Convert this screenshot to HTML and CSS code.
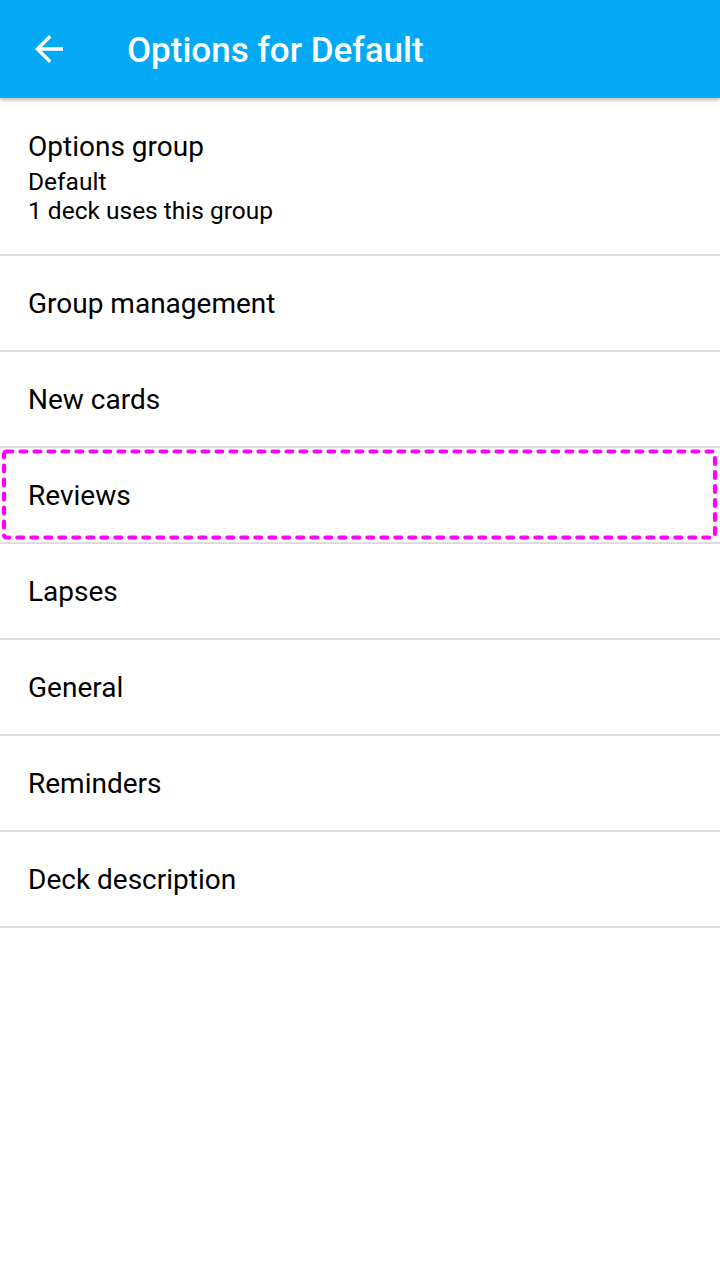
FILE: index.html
```html
<!DOCTYPE html>
<html>
<head>
<meta charset="utf-8">
<link rel="stylesheet" href="styles.css">
</head>
<body>
<header class="toolbar">
  <div class="nav-btn">
    <svg width="42" height="42" viewBox="0 0 24 24"><path d="M20 11H7.83l5.59-5.59L12 4l-8 8 8 8 1.41-1.41L7.83 13H20v-2z" fill="#fff"/></svg>
  </div>
  <h1 class="title">Options for Default</h1>
</header>
<main class="list">
  <div class="row row-tall">
    <div class="row-title">Options group</div>
    <div class="row-sub">Default</div>
    <div class="row-sub">1 deck uses this group</div>
  </div>
  <div class="row"><div class="row-title">Group management</div></div>
  <div class="row"><div class="row-title">New cards</div></div>
  <div class="row row-focus">
    <div class="row-title">Reviews</div>
    <svg class="focus-ring" width="720" height="94" viewBox="0 0 720 94"><rect x="4" y="3.5" width="711" height="86" rx="2.5" fill="none" stroke="#ff00ff" stroke-width="4.2" stroke-dasharray="5.8 8.2" stroke-linecap="round"/></svg>
  </div>
  <div class="row"><div class="row-title">Lapses</div></div>
  <div class="row"><div class="row-title">General</div></div>
  <div class="row"><div class="row-title">Reminders</div></div>
  <div class="row"><div class="row-title">Deck description</div></div>
</main>
</body>
</html>
```
FILE: styles.css
```css
html, body {
  margin: 0;
  padding: 0;
  background: #fff;
  font-family: Roboto, "Noto Sans", sans-serif;
}
.toolbar {
  height: 98px;
  background: #03a9f4;
  display: flex;
  align-items: center;
  box-shadow: 0 2px 4px rgba(0,0,0,0.28);
  position: relative;
  z-index: 1;
}
.nav-btn {
  width: 42px;
  height: 42px;
  margin-left: 28px;
  display: flex;
}
.title {
  margin: 3px 0 0 57px;
  color: #fff;
  font-size: 35px;
  font-weight: 500;
}
.list {
  display: flex;
  flex-direction: column;
}
.row {
  height: 92px;
  padding: 2px 28px 0;
  border-bottom: 2px solid #dcdcdc;
  display: flex;
  flex-direction: column;
  justify-content: center;
  box-sizing: content-box;
  position: relative;
}
.row-tall {
  height: 154px;
}
.row-title {
  font-size: 28px;
  color: #000;
  line-height: 36px;
}
.row-sub {
  font-size: 24.5px;
  color: #000;
  line-height: 29px;
}
.row-tall .row-title {
  margin-bottom: 2px;
}
.focus-ring {
  position: absolute;
  top: 0;
  left: 0;
  pointer-events: none;
}
```
